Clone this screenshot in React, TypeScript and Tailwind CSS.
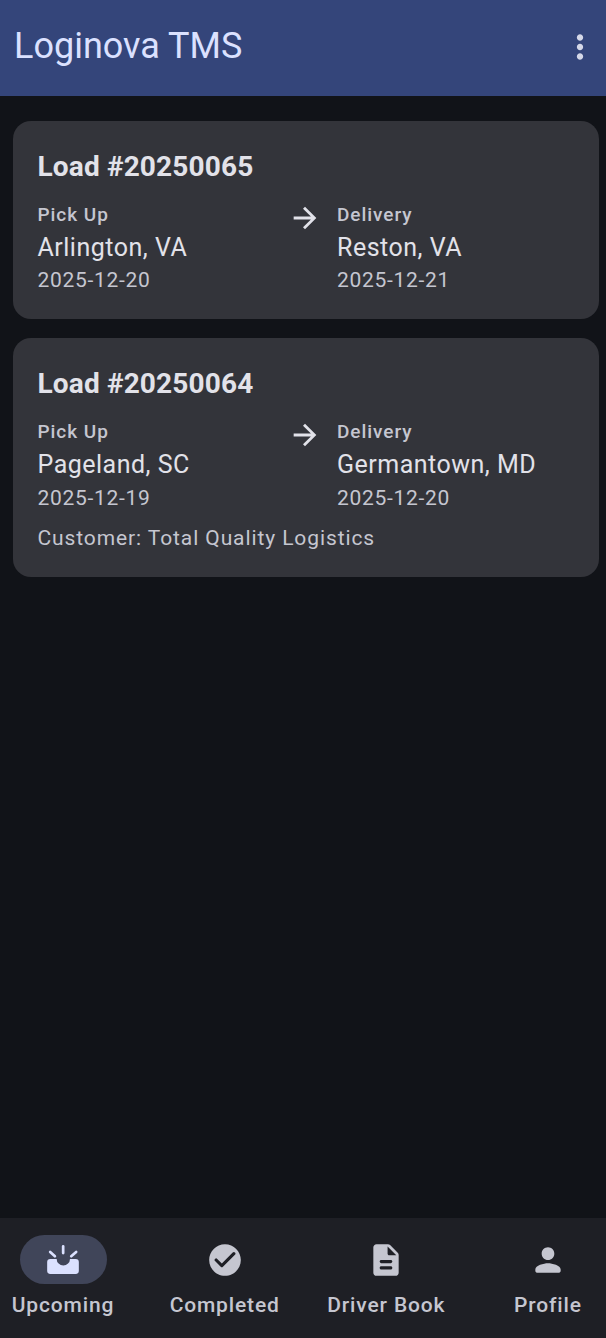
const font = { fontFamily: "Roboto, sans-serif" };

function Arrow() {
  return (
    <svg viewBox="0 0 24 24" className="w-[34px] h-[34px] -mt-[2px] -ml-[1px] fill-[#e2e2e9]">
      <path d="M12 4l-1.41 1.41L16.17 11H4v2h12.17l-5.58 5.59L12 20l8-8z" />
    </svg>
  );
}

function Stop({ label, city, date }: { label: string; city: string; date: string }) {
  return (
    <div className="flex-1 flex flex-col">
      <div className="text-[19px] leading-[24px] h-[24px] font-medium tracking-[0.95px] text-[#c5c6d0]">{label}</div>
      <div className="text-[25px] leading-[32px] h-[32px] mt-[5px] tracking-[0.5px] text-[#e2e2e9]">{city}</div>
      <div className="text-[21px] leading-[28px] h-[28px] mt-[2.5px] tracking-[0.7px] text-[#c5c6d0]">{date}</div>
    </div>
  );
}

function Card({ id, pick, drop, customer }: { id: string; pick: [string, string]; drop: [string, string]; customer?: string }) {
  return (
    <div className="bg-[#33343a] rounded-[18px] pl-[24.5px] pr-[25px] pt-[28px] pb-[25px]">
      <div className="text-[28px] leading-[36px] font-bold tracking-[0.15px] text-[#e2e2e9]">{id}</div>
      <div className="flex mt-[18px]">
        <Stop label="Pick Up" city={pick[0]} date={pick[1]} />
        <div className="w-[63px] flex justify-center items-start"><Arrow /></div>
        <Stop label="Delivery" city={drop[0]} date={drop[1]} />
      </div>
      {customer && (
        <div className="text-[21px] leading-[28px] mt-[12.5px] tracking-[0.9px] text-[#c5c6d0]">{customer}</div>
      )}
    </div>
  );
}

function NavItem({ label, active, children }: { label: string; active?: boolean; children: React.ReactNode }) {
  return (
    <div className="w-[116px] flex flex-col items-center">
      <div className={`w-[87px] h-[49px] rounded-full flex items-center justify-center ${active ? "bg-[#404559]" : ""}`}>
        {children}
      </div>
      <div className="mt-[6px] text-[21px] leading-[30px] font-medium tracking-[0.85px] whitespace-nowrap text-[#c5c6d0]">
        {label}
      </div>
    </div>
  );
}

export default function App() {
  return (
    <div style={font} className="w-[606px] h-[1338px] flex flex-col bg-[#111318] overflow-hidden">
      <header className="h-[96px] shrink-0 bg-[#34457a] flex items-center justify-between pl-[14px] pr-[14px]">
        <div className="text-[36px] leading-[44px] mb-[5px] text-[#dbe1ff]">Loginova TMS</div>
        <svg viewBox="0 0 24 24" className="w-[38px] h-[38px] mb-[3px] -mr-[7px] fill-[#d5d8e8]">
          <path d="M12 8c1.1 0 2-.9 2-2s-.9-2-2-2-2 .9-2 2 .9 2 2 2zm0 2c-1.1 0-2 .9-2 2s.9 2 2 2 2-.9 2-2-.9-2-2-2zm0 6c-1.1 0-2 .9-2 2s.9 2 2 2 2-.9 2-2-.9-2-2-2z" />
        </svg>
      </header>
      <main className="flex-1 flex flex-col gap-[19px] pt-[24.5px] pl-[13px] pr-[7.5px]">
        <Card id="Load #20250065" pick={["Arlington, VA", "2025-12-20"]} drop={["Reston, VA", "2025-12-21"]} />
        <Card id="Load #20250064" pick={["Pageland, SC", "2025-12-19"]} drop={["Germantown, MD", "2025-12-20"]} customer="Customer: Total Quality Logistics" />
      </main>
      <nav className="h-[120px] shrink-0 bg-[#1e1f25] flex justify-between pl-[5px] pt-[17px]">
        <NavItem label="Upcoming" active>
          <svg viewBox="0 0 24 24" className="w-[38px] h-[38px] fill-[#dbe1ff]">
            <path d="M4 11.3h4a4.2 4.2 0 0 0 8.4 0h3.6a2 2 0 0 1 2 2v5.5a2 2 0 0 1-2 2H4a2 2 0 0 1-2-2v-5.5a2 2 0 0 1 2-2z" />
            <g stroke="#dbe1ff" strokeWidth="1.7" strokeLinecap="round" fill="none">
              <line x1="12.1" y1="3.4" x2="12.1" y2="7.6" />
              <line x1="3.9" y1="6.9" x2="6.9" y2="9.6" />
              <line x1="20.3" y1="6.9" x2="17.2" y2="9.6" />
            </g>
          </svg>
        </NavItem>
        <NavItem label="Completed">
          <svg viewBox="0 0 24 24" className="w-[38px] h-[38px] fill-[#c5c6d0]">
            <path d="M12 2C6.48 2 2 6.48 2 12s4.48 10 10 10 10-4.48 10-10S17.52 2 12 2zM9.29 16.29 5.7 12.7a.996.996 0 1 1 1.41-1.41L10 14.17l6.88-6.88a.996.996 0 1 1 1.41 1.41l-7.59 7.59a.996.996 0 0 1-1.41 0z" />
          </svg>
        </NavItem>
        <NavItem label="Driver Book">
          <svg viewBox="0 0 24 24" className="w-[38px] h-[38px] fill-[#c5c6d0]">
            <path d="M14.59 2.59c-.38-.38-.89-.59-1.42-.59H6c-1.1 0-2 .9-2 2v16c0 1.1.89 2 1.99 2H18c1.1 0 2-.9 2-2V8.83c0-.53-.21-1.04-.59-1.41l-4.82-4.83zM15 18H9c-.55 0-1-.45-1-1s.45-1 1-1h6c.55 0 1 .45 1 1s-.45 1-1 1zm0-4H9c-.55 0-1-.45-1-1s.45-1 1-1h6c.55 0 1 .45 1 1s-.45 1-1 1zm-2-6V3.5L18.5 9H14c-.55 0-1-.45-1-1z" />
          </svg>
        </NavItem>
        <NavItem label="Profile">
          <svg viewBox="0 0 24 24" className="w-[38px] h-[38px] fill-[#c5c6d0]">
            <path d="M12 12c2.21 0 4-1.79 4-4s-1.79-4-4-4-4 1.79-4 4 1.79 4 4 4zm0 2c-2.67 0-8 1.34-8 4v1c0 .55.45 1 1 1h14c.55 0 1-.45 1-1v-1c0-2.66-5.33-4-8-4z" />
          </svg>
        </NavItem>
      </nav>
    </div>
  );
}
